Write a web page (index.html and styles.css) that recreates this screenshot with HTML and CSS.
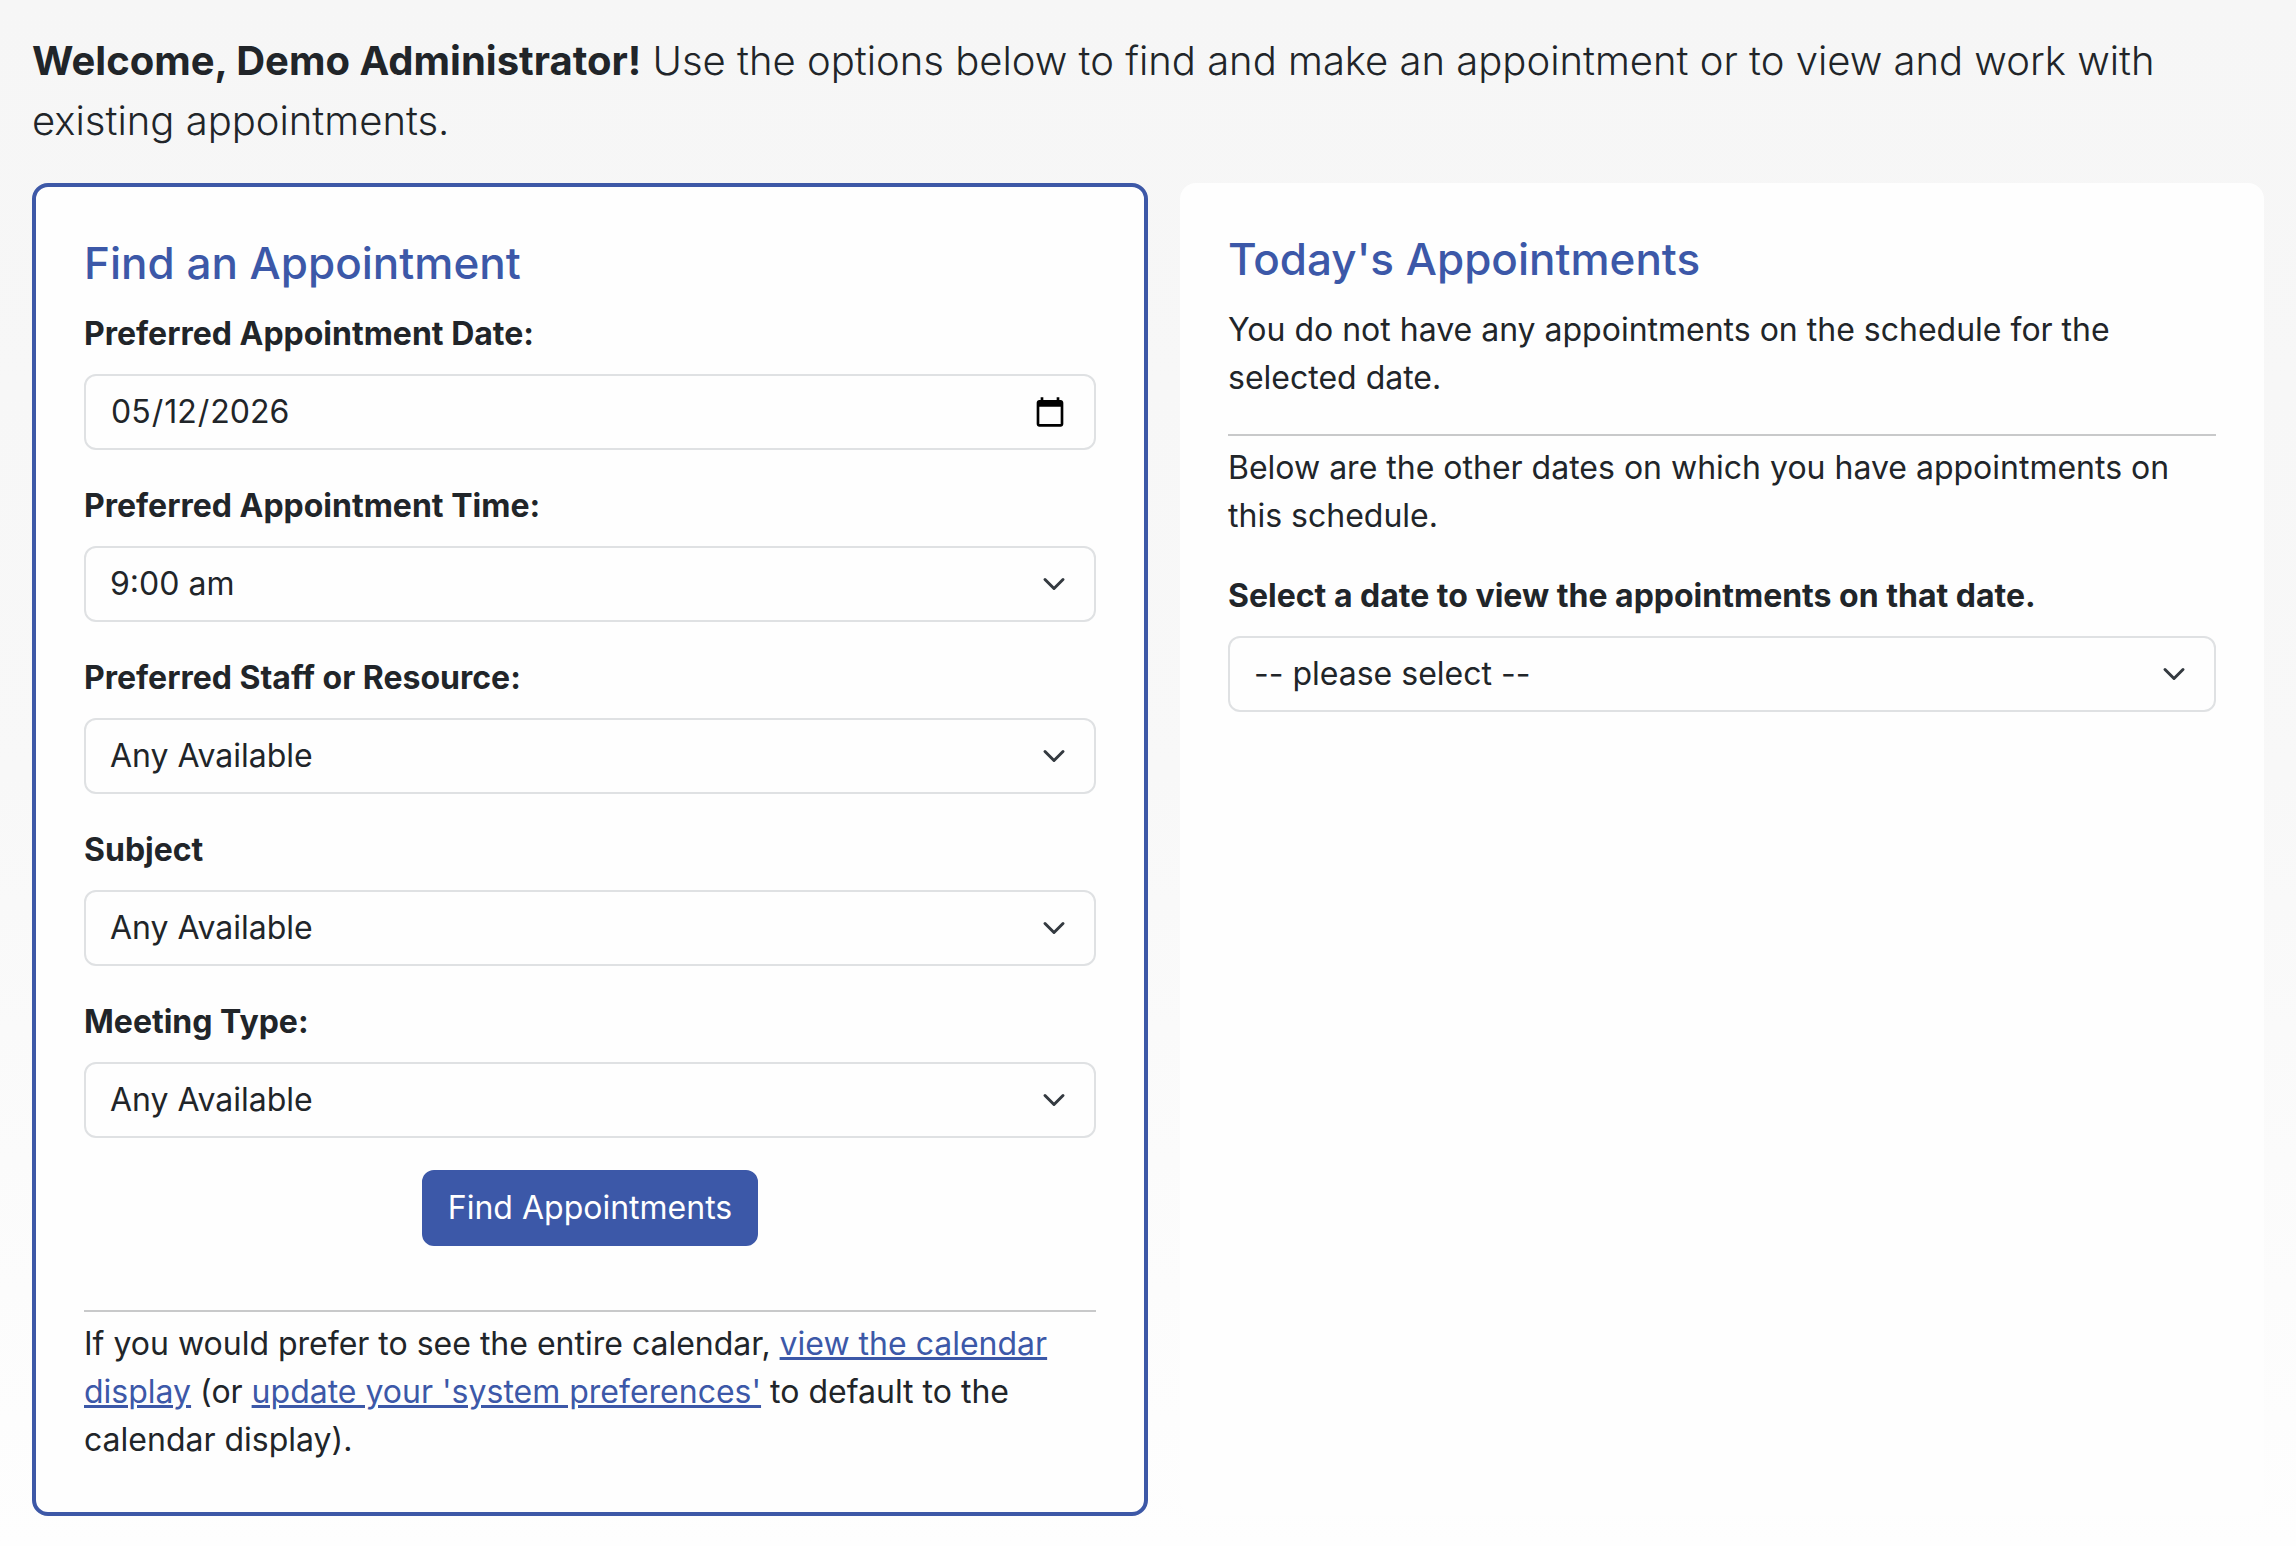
FILE: index.html
```html
<!DOCTYPE html>
<html lang="en">
<head>
  <meta charset="UTF-8" />
  <meta name="viewport" content="width=device-width, initial-scale=1.0"/>
  <title>Appointments</title>
  <link rel="stylesheet" href="styles.css">
</head>
<body>

  <p class="lead"><strong>Welcome, Demo Administrator!</strong> Use the options below to find and make an appointment or to view and work with existing appointments.</p>

  <main class="panels">
    <!-- Search form -->
    <section class="panel panel-find">
      <h2>Find an Appointment</h2>

      <form id="findForm">
        <div class="field">
          <label for="apptDate">Preferred Appointment Date:</label>
          <input type="date" id="apptDate" name="apptDate" value="2026-05-12" />
        </div>

        <div class="field">
          <label for="apptTime">Preferred Appointment Time:</label>
          <select id="apptTime" name="apptTime">
            <option>9:00 am</option>
          </select>
        </div>

        <div class="field">
          <label for="resource">Preferred Staff or Resource:</label>
          <select id="resource" name="resource">
            <option>Any Available</option>
          </select>
        </div>

        <div class="field">
          <label for="subject">Subject</label>
          <select id="subject" name="subject">
            <option>Any Available</option>
          </select>
        </div>

        <div class="field">
          <label for="meetingType">Meeting Type:</label>
          <select id="meetingType" name="meetingType">
            <option>Any Available</option>
          </select>
        </div>

        <button type="submit">Find Appointments</button>
      </form>

      <hr>
      <p>If you would prefer to see the entire calendar, <a href="calendar.html">view the calendar display</a> (or <a href="preferences.html">update your 'system preferences'</a> to default to the calendar display).</p>
    </section>

    <!-- Appointments for the current day -->
    <section class="panel panel-today">
      <h2>Today's Appointments</h2>
      <p>You do not have any appointments on the schedule for the selected date.</p>

      <hr>
      <p>Below are the other dates on which you have appointments on this schedule.</p>

      <div class="field">
        <label for="otherDate">Select a date to view the appointments on that date.</label>
        <select id="otherDate" name="otherDate">
          <option>-- please select --</option>
        </select>
      </div>
    </section>
  </main>

</body>
</html>
```

FILE: styles.css
```css
* {
  box-sizing: border-box;
}

html {
  min-height: 100%;
  background: linear-gradient(#f6f6f6, #f8f8f8 50%, #fefefe);
}

body {
  font-family: Inter, "Liberation Sans", sans-serif;
  font-size: 32px;
  line-height: 48px;
  color: #212529;
  margin: 0;
  padding: 31px 32px;
}

p {
  margin: 0;
}

.lead {
  font-size: 40px;
  font-weight: 300;
  line-height: 60px;
  margin-bottom: 32px;
}

.lead strong {
  font-weight: 700;
}

/* The find panel is a little wider than the list beside it */
.panels {
  display: grid;
  grid-template-columns: 1116fr 1084fr;
  gap: 32px;
}

.panel {
  background: #fefefe;
  border-radius: 16px;
  padding: 48px;
}

.panel-find {
  border: 4px solid #3d58a7;
}

h2 {
  color: #3c58a8;
  font-size: 44px;
  font-weight: 500;
  line-height: 56px;
  margin: 0 0 19px;
}

hr {
  border: none;
  border-top: 2px solid #c8c9ca;
  margin: 32px 0 8px;
}

.field {
  margin-bottom: 32px;
}

label {
  display: block;
  font-weight: 700;
  margin-bottom: 16px;
}

input, select {
  display: block;
  width: 100%;
  height: 76px;
  padding: 12px 24px;
  border: 2px solid #dfe1e3;
  border-radius: 12px;
  background-color: #fefefe;
  color: #212529;
  font: inherit;
  appearance: none;
}

select {
  background-image: url("data:image/svg+xml,%3csvg xmlns='http://www.w3.org/2000/svg' viewBox='0 0 16 16'%3e%3cpath fill='none' stroke='%23343a40' stroke-linecap='round' stroke-linejoin='round' stroke-width='2' d='m2 5 6 6 6-6'/%3e%3c/svg%3e");
  background-repeat: no-repeat;
  background-position: right 24px center;
  background-size: 32px 24px;
}

input::-webkit-datetime-edit {
  padding: 0;
}

input::-webkit-calendar-picker-indicator {
  width: 32px;
  height: 32px;
  padding: 0;
  margin-right: 4px;
  background: url("data:image/svg+xml,%3csvg xmlns='http://www.w3.org/2000/svg' viewBox='0 0 24 24'%3e%3cpath d='M20 3h-1V1h-2v2H7V1H5v2H4c-1.1 0-2 .9-2 2v16c0 1.1.9 2 2 2h16c1.1 0 2-.9 2-2V5c0-1.1-.9-2-2-2zm0 18H4V8h16v13z'/%3e%3c/svg%3e") center / 32px no-repeat;
}

button {
  display: block;
  margin: 0 auto 64px;
  padding: 12px 24px;
  border: 2px solid #3c58a8;
  border-radius: 12px;
  background: #3c58a8;
  color: #fff;
  font: inherit;
  cursor: pointer;
}

button:hover {
  background: #334b8f;
}

a {
  color: #3c58a8;
}

.panel-today p + .field {
  margin-top: 32px;
}
```
